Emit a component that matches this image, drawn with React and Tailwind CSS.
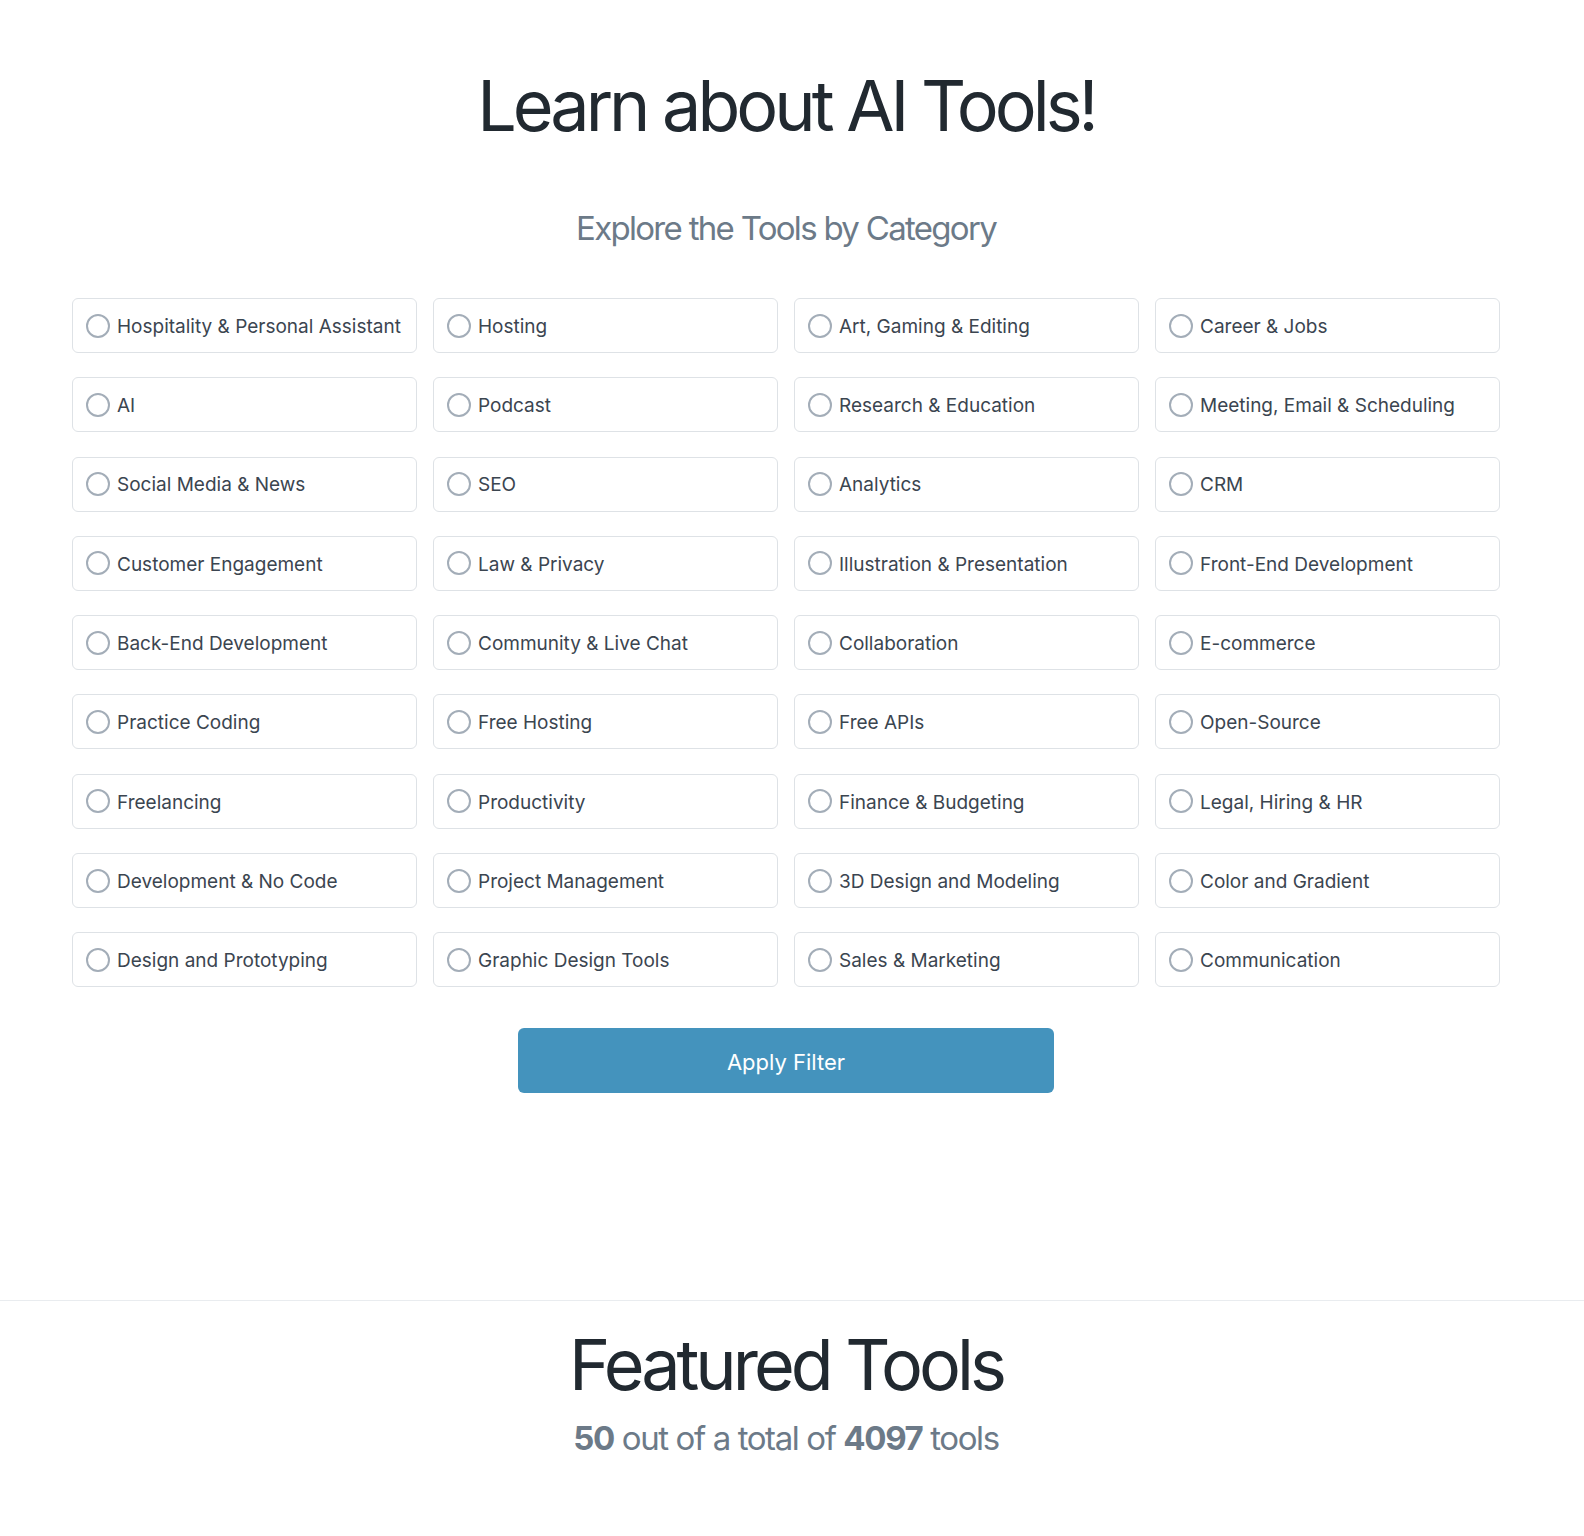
const CATEGORIES = [
  'Hospitality & Personal Assistant', 'Hosting', 'Art, Gaming & Editing', 'Career & Jobs',
  'AI', 'Podcast', 'Research & Education', 'Meeting, Email & Scheduling',
  'Social Media & News', 'SEO', 'Analytics', 'CRM',
  'Customer Engagement', 'Law & Privacy', 'Illustration & Presentation', 'Front-End Development',
  'Back-End Development', 'Community & Live Chat', 'Collaboration', 'E-commerce',
  'Practice Coding', 'Free Hosting', 'Free APIs', 'Open-Source',
  'Freelancing', 'Productivity', 'Finance & Budgeting', 'Legal, Hiring & HR',
  'Development & No Code', 'Project Management', '3D Design and Modeling', 'Color and Gradient',
  'Design and Prototyping', 'Graphic Design Tools', 'Sales & Marketing', 'Communication',
];

function CategoryOption({ label }) {
  return (
    <label className="flex items-center h-[55px] px-[13px] rounded-[6px] border border-[#dee2e6] bg-white cursor-pointer">
      <span className="w-[24px] h-[24px] rounded-full border-[2.5px] border-[#a3adb8] shrink-0" />
      <span className="ml-[7px] pt-[3px] text-[19px] text-[#3b4550] whitespace-nowrap">{label}</span>
    </label>
  );
}

export default function App() {
  return (
    <div className="min-h-screen bg-white font-['Inter',sans-serif]">
      <section className="w-[1572px] pt-[64px] pb-[207px] flex flex-col items-center">
        <h1 className="text-[70px] leading-[84px] text-[#212930] tracking-[-4px]">Learn about AI Tools!</h1>
        <h2 className="mt-[60px] text-[33px] leading-[40px] text-[#6c7a88] tracking-[-1.7px]">Explore the Tools by Category</h2>
        <div className="mt-[50px] w-[1428px] grid grid-cols-4 gap-x-[16px] gap-y-[24.3px]">
          {CATEGORIES.map((c) => (
            <CategoryOption key={c} label={c} />
          ))}
        </div>
        <button className="mt-[41px] w-[536px] h-[65px] pt-[3px] rounded-[6px] bg-[#4493bd] text-white text-[22px]">
          Apply Filter
        </button>
      </section>
      <div className="border-t border-[#e9ecef]" />
      <section className="w-[1572px] pt-[22px] pb-[60px] flex flex-col items-center">
        <h2 className="text-[70px] leading-[84px] text-[#212930] tracking-[-4px]">Featured Tools</h2>
        <p className="mt-[11px] text-[33px] leading-[40px] text-[#6c7a88] tracking-[-1.4px]">
          <span className="font-bold">50</span> out of a total of <span className="font-bold">4097</span> tools
        </p>
      </section>
    </div>
  );
}
